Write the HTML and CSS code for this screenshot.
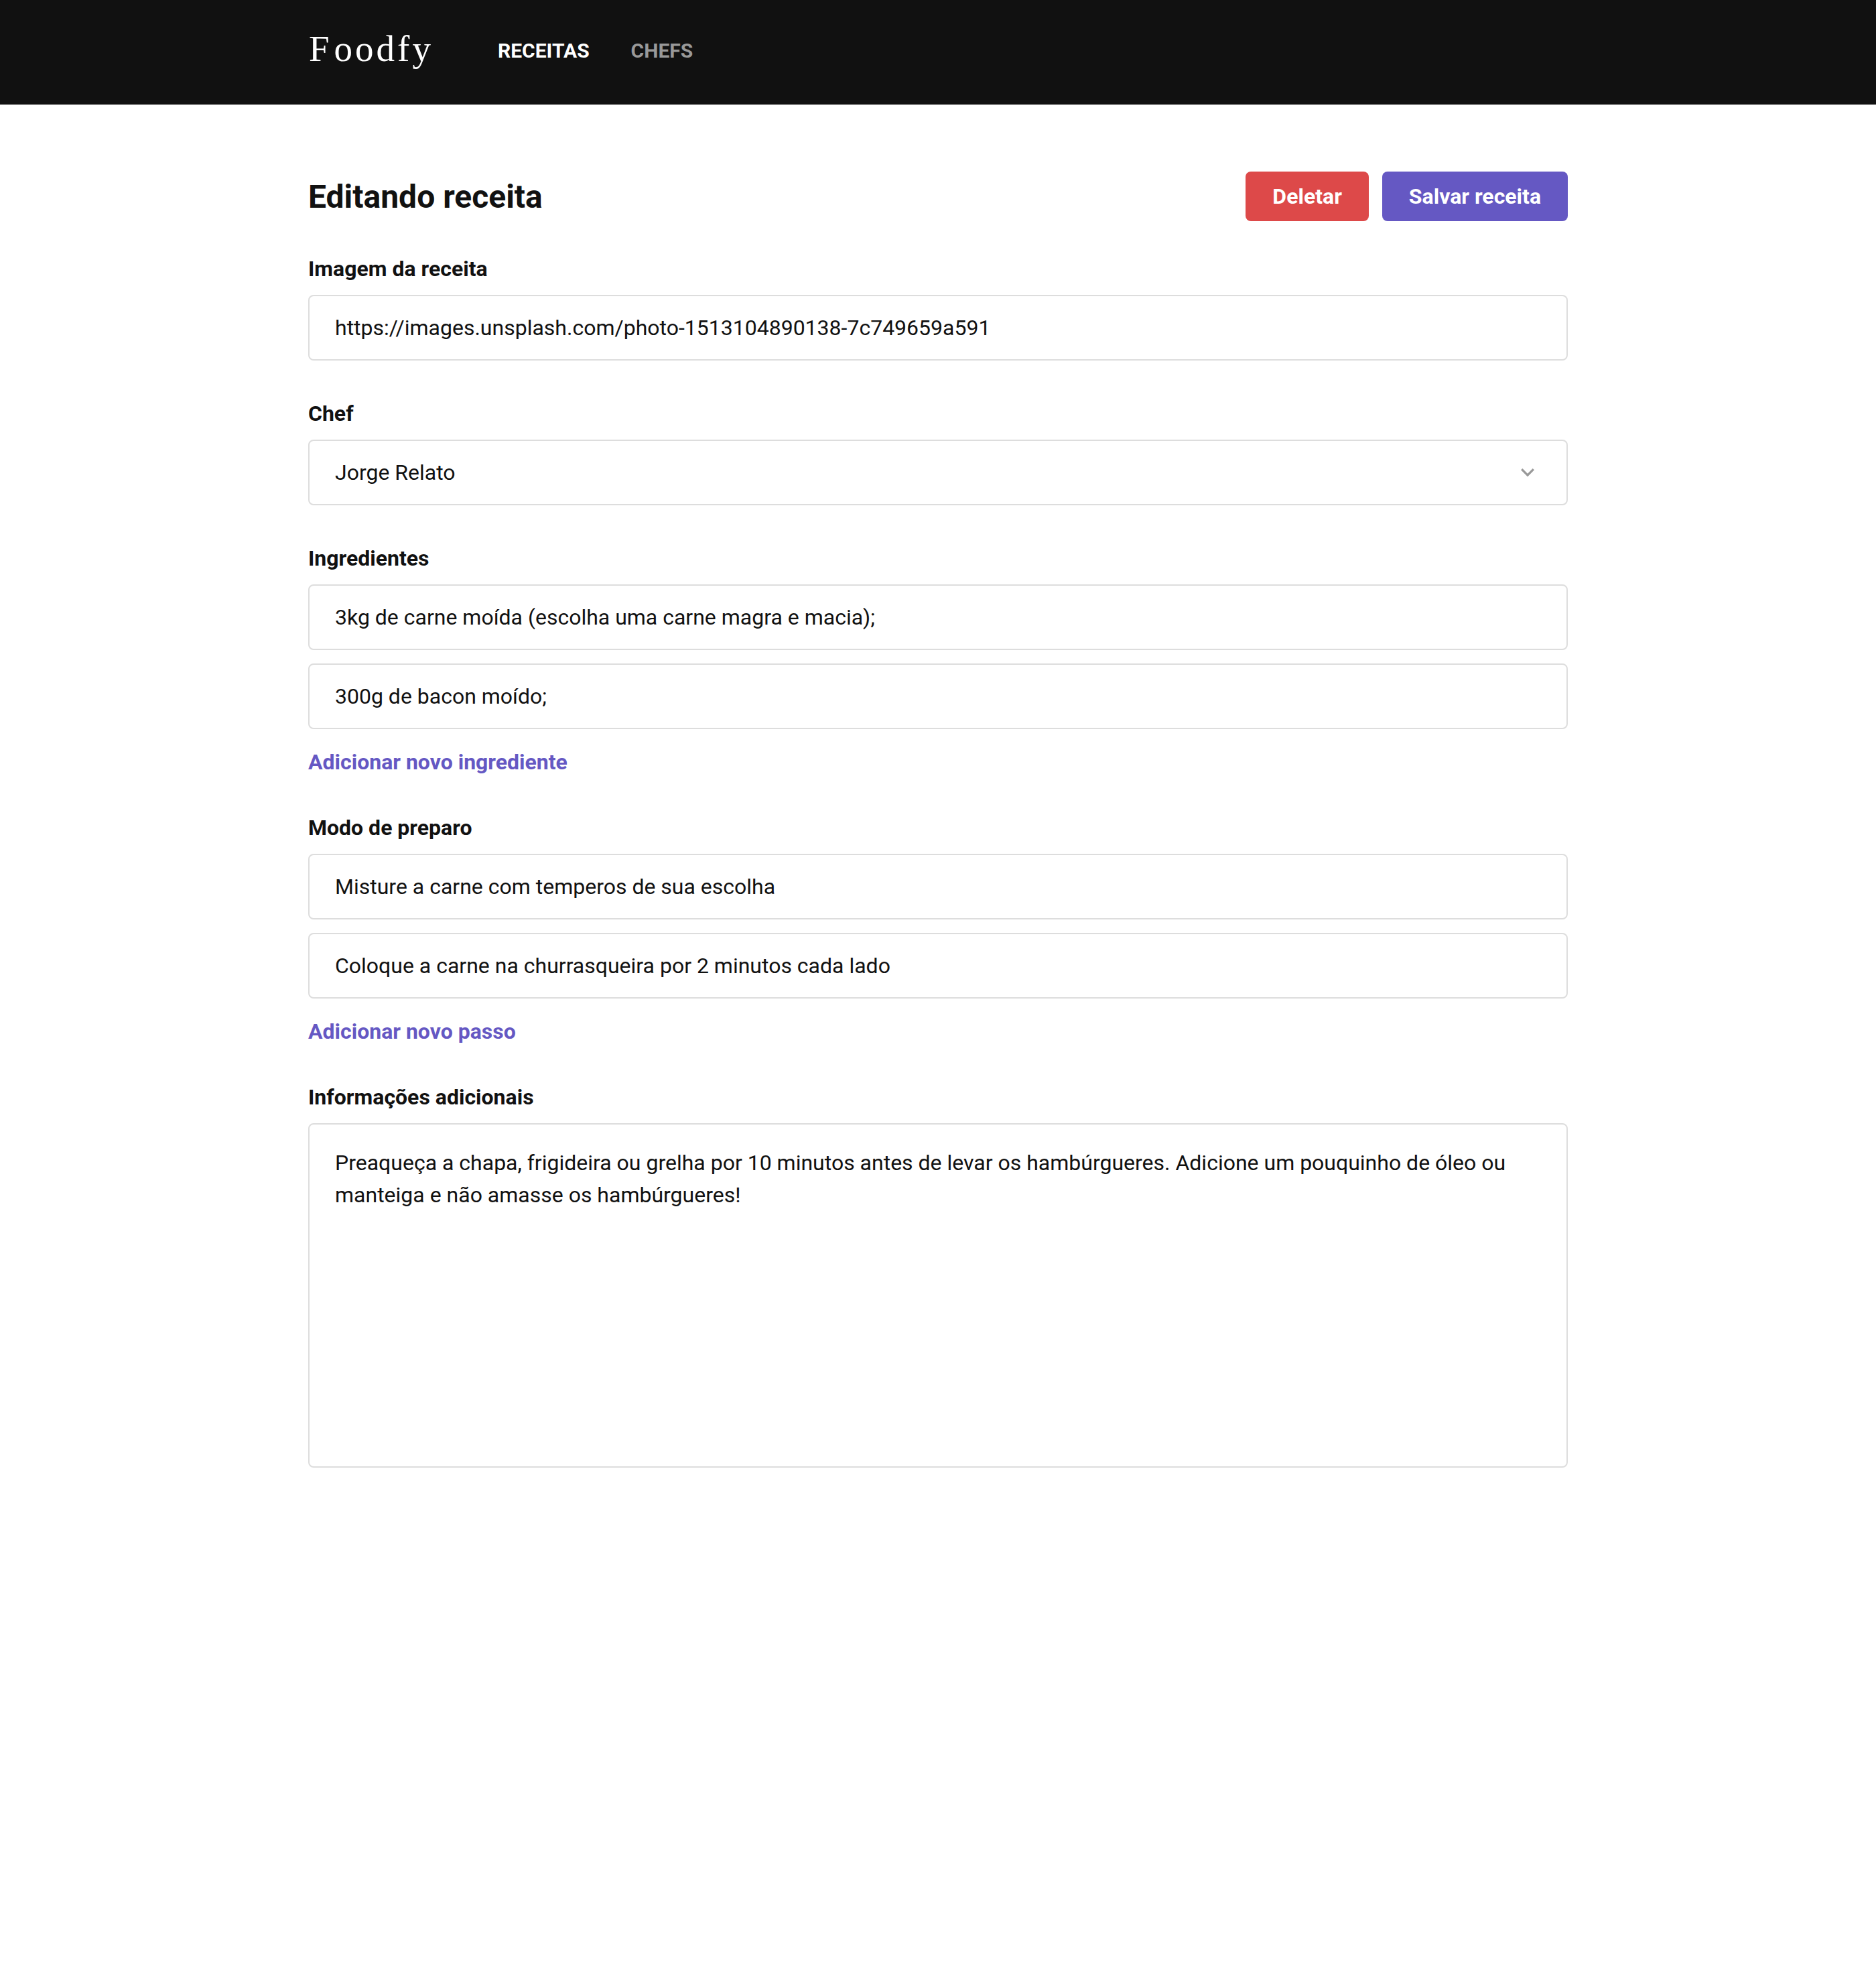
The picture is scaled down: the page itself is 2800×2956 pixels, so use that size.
FILE: index.html
```html
<!DOCTYPE html>
<html lang="pt-BR">
<head>
<meta charset="utf-8">
<title>Foodfy</title>
<link rel="stylesheet" href="styles.css">
</head>
<body>
<header class="topbar">
  <div class="container topbar-inner">
    <a class="logo"><span class="logo-initial">F</span>oodfy</a>
    <nav class="nav">
      <a class="nav-link active">RECEITAS</a>
      <a class="nav-link">CHEFS</a>
    </nav>
  </div>
</header>
<main class="container">
  <div class="page-head">
    <h1 class="title">Editando receita</h1>
    <div class="actions">
      <a class="button danger">Deletar</a>
      <a class="button primary">Salvar receita</a>
    </div>
  </div>
  <form class="form">
    <section class="field">
      <h2 class="label">Imagem da receita</h2>
      <div class="input">https://images.unsplash.com/photo-1513104890138-7c749659a591</div>
    </section>
    <section class="field">
      <h2 class="label">Chef</h2>
      <div class="input select">
        <span>Jorge Relato</span>
        <svg class="chevron" viewBox="6 8.59 12 7.41"><path d="M7.41 8.59 12 13.17l4.59-4.58L18 10l-6 6-6-6z"/></svg>
      </div>
    </section>
    <section class="field">
      <h2 class="label">Ingredientes</h2>
      <div class="input">3kg de carne moída (escolha uma carne magra e macia);</div>
      <div class="input">300g de bacon moído;</div>
      <a class="add">Adicionar novo ingrediente</a>
    </section>
    <section class="field">
      <h2 class="label">Modo de preparo</h2>
      <div class="input">Misture a carne com temperos de sua escolha</div>
      <div class="input">Coloque a carne na churrasqueira por 2 minutos cada lado</div>
      <a class="add">Adicionar novo passo</a>
    </section>
    <section class="field">
      <h2 class="label">Informações adicionais</h2>
      <div class="textarea">Preaqueça a chapa, frigideira ou grelha por 10 minutos antes de levar os hambúrgueres. Adicione um pouquinho de óleo ou manteiga e não amasse os hambúrgueres!</div>
    </section>
  </form>
</main>
</body>
</html>
```
FILE: styles.css
```css
* { box-sizing: border-box; margin: 0; padding: 0; }

body {
  background: #fff;
  color: #111;
  font-family: Roboto, "Liberation Sans", sans-serif;
  font-size: 32px;
  line-height: 38px;
}

.container { width: 1880px; margin: 0 auto; }

.topbar { background: #111; height: 156px; }

.topbar-inner { display: flex; align-items: flex-start; padding-top: 39px; }

.logo {
  width: 283px;
  padding-left: 1px;
  color: #fff;
  font-family: "Liberation Serif", serif;
  font-size: 55px;
  line-height: 68px;
  letter-spacing: 4px;
}
.logo-initial { letter-spacing: 7px; }

.nav { display: flex; gap: 62px; padding-top: 18px; }

.nav-link { color: #999; font-size: 30px; font-weight: 700; }
.nav-link.active { color: #fff; }

.page-head {
  display: flex;
  justify-content: space-between;
  align-items: center;
  height: 74px;
  margin-top: 100px;
}

.title { padding-top: 2px; font-size: 48px; line-height: 56px; font-weight: 700; }

.actions { display: flex; gap: 20px; }

.button {
  height: 74px;
  padding: 18px 40px;
  border-radius: 8px;
  color: #fff;
  font-weight: 700;
}
.danger { background: #dd4949; }
.primary { background: #6558c3; }

.form { display: flex; flex-direction: column; gap: 60px; margin-top: 52px; }

.field { display: flex; flex-direction: column; gap: 20px; }

.label { font-size: 32px; line-height: 38px; font-weight: 700; }

.input, .textarea {
  border: 2px solid #ddd;
  border-radius: 8px;
  padding: 28px 38px;
}
.input { height: 98px; }

.select { display: flex; align-items: center; justify-content: space-between; padding-right: 48px; }

.chevron { width: 20px; height: 12.35px; fill: #999; }

.add { margin-top: 10px; color: #6558c3; font-weight: 700; }

.textarea { height: 514px; padding-top: 33px; line-height: 48px; }
```
